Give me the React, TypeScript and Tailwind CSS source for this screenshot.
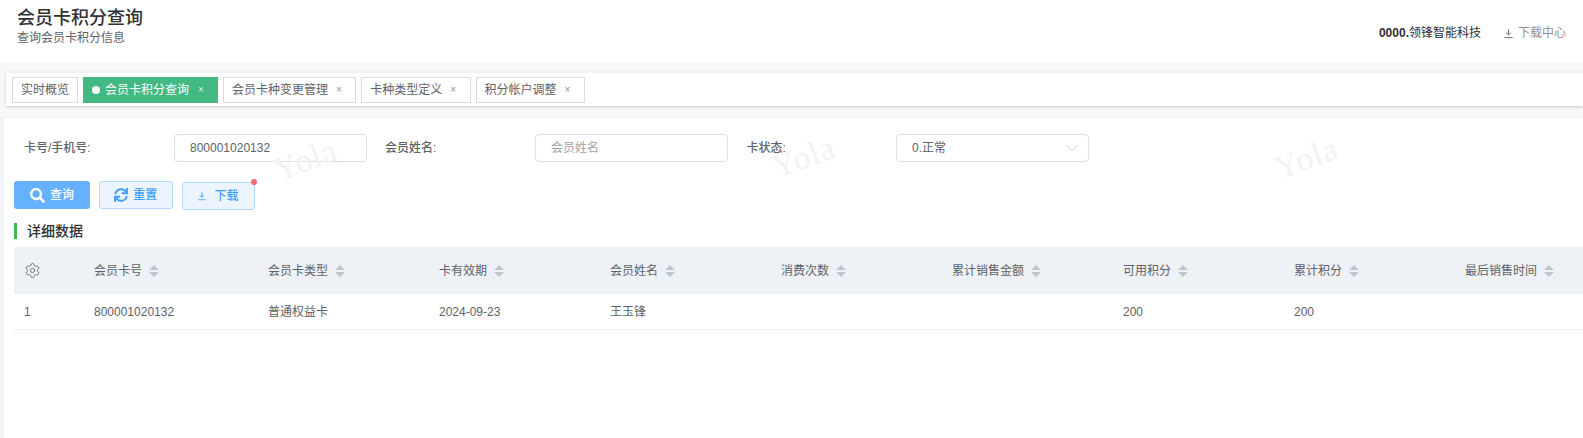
import React from 'react';
import { Settings, ChevronDown } from 'lucide-react';
import { FaSearch, FaSync } from 'react-icons/fa';

const font = { fontFamily: '"Liberation Sans", "Noto Sans CJK SC", sans-serif' };

const tabs = ['会员卡种变更管理', '卡种类型定义', '积分帐户调整'];

const columns = [
    { title: '会员卡号', width: 'w-[174px]' },
    { title: '会员卡类型', width: 'w-[171px]' },
    { title: '卡有效期', width: 'w-[171px]' },
    { title: '会员姓名', width: 'w-[171px]' },
    { title: '消费次数', width: 'w-[171px]' },
    { title: '累计销售金额', width: 'w-[171px]' },
    { title: '可用积分', width: 'w-[171px]' },
    { title: '累计积分', width: 'w-[171px]' },
    { title: '最后销售时间', width: 'w-[171px]' },
];

const row = ['800001020132', '普通权益卡', '2024-09-23', '王玉锋', '', '', '200', '200', ''];

const DownloadIcon: React.FC<{ className?: string }> = (props) => (
    <svg viewBox="0 0 12 12" fill="none" stroke="currentColor" strokeWidth="1" className={props.className}>
        <path d="M6 1.5v6M3.4 5l2.6 2.6L8.6 5M1.5 10.5h9" />
    </svg>
);

const SortIcon = () => (
    <svg viewBox="0 0 10 12" className="w-[10px] h-[12px] ml-[7px] shrink-0" fill="#c0c4cc">
        <path d="M5 0l5 5H0zM0 7h10l-5 5z" />
    </svg>
);

const Watermark: React.FC<{ className: string }> = (props) => (
    <span className={`absolute rotate-[-20deg] text-[33px] leading-[36px] tracking-[1px] text-[#f2f2f4] pointer-events-none ${props.className}`} style={{ fontFamily: '"Liberation Serif", serif' }}>
        Yola
    </span>
);

const App: React.FC = () => {
    return (
        <div className="w-[1583px] h-[438px] overflow-hidden bg-[#f7f8fa] text-[#606266] text-[12px]" style={font}>
            {/* header */}
            <div className="h-[63px] bg-white flex justify-between pl-[17px] pr-[17px]">
                <div className="pt-[6px]">
                    <div className="text-[18px] leading-[24px] font-medium text-[#303133]">会员卡积分查询</div>
                    <div className="text-[12px] leading-[14px] mt-[1px] text-[#606266]">查询会员卡积分信息</div>
                </div>
                <div className="flex items-center gap-[22px] pt-[3px]">
                    <div className="text-[#303133]"><span className="font-bold">0000.</span>领锋智能科技</div>
                    <div className="flex items-center gap-[4px] text-[#909399]">
                        <DownloadIcon className="w-[11px] h-[11px] text-[#606266]" />
                        下载中心
                    </div>
                </div>
            </div>

            {/* tabs */}
            <div className="mt-[9px] ml-[6px] h-[34px] bg-white flex items-center gap-[5px] pl-[6px] border-t border-[#eef0f4] shadow-[0_1px_3px_rgba(0,0,0,0.2)]">
                <div className="h-[26px] flex items-center px-[8px] border border-[#d8dce5]">实时概览</div>
                <div className="h-[26px] flex items-center pl-[9px] pr-[14px] bg-[#42b983] text-white">
                    <span className="w-[8px] h-[8px] rounded-full bg-white mr-[5px]" />
                    会员卡积分查询
                    <span className="ml-[9px] text-[10px] text-[#d9f2e6]">×</span>
                </div>
                {tabs.map((tab) => (
                    <div key={tab} className="h-[26px] flex items-center pl-[8px] pr-[13.5px] border border-[#d8dce5]">
                        {tab}
                        <span className="ml-[8px] text-[10px] text-[#909399]">×</span>
                    </div>
                ))}
            </div>

            {/* content */}
            <div className="mt-[11px] h-[321px] bg-[#f0f2f5] pl-[4px]">
                <div className="relative h-full overflow-hidden bg-white pl-[10px] pt-[16px] border-t border-[#eef0f4]">
                    <Watermark className="left-[269px] top-[24px]" />
                    <Watermark className="left-[767px] top-[21px]" />
                    <Watermark className="left-[1270px] top-[22px]" />

                    {/* filters */}
                    <div className="flex items-center h-[28px]">
                        <div className="w-[160px] shrink-0 pl-[10px] font-medium">卡号/手机号:</div>
                        <div className="w-[192.5px] shrink-0 h-[28px] flex items-center pl-[15px] border border-[#dcdfe6] rounded-[4px]">800001020132</div>
                        <div className="w-[168.5px] shrink-0 pl-[18.5px] font-medium">会员姓名:</div>
                        <div className="w-[192.5px] shrink-0 h-[28px] flex items-center pl-[15px] border border-[#dcdfe6] rounded-[4px] text-[#a0a4ac]">会员姓名</div>
                        <div className="w-[168.5px] shrink-0 pl-[19px] font-medium">卡状态:</div>
                        <div className="w-[192.5px] shrink-0 h-[28px] flex items-center justify-between pl-[15px] pr-[5px] border border-[#dcdfe6] rounded-[4px]">
                            0.正常
                            <ChevronDown className="w-[22px] h-[22px] text-[#c0c4cc]" strokeWidth={1} />
                        </div>
                    </div>

                    {/* buttons */}
                    <div className="flex items-start mt-[19px]">
                        <button className="w-[76px] h-[28px] flex items-center justify-center gap-[5px] rounded-[3px] bg-[#66b1ff] text-white font-medium">
                            <FaSearch className="w-[15px] h-[15px]" />
                            查询
                        </button>
                        <button className="ml-[9px] w-[73.5px] h-[28px] flex items-center justify-center gap-[5px] rounded-[3px] border border-[#b3d8ff] bg-[#ecf5ff] text-[#409eff] font-medium">
                            <FaSync className="w-[14px] h-[14px]" />
                            重置
                        </button>
                        <button className="relative ml-[9px] w-[73px] h-[28px] mt-[1px] flex items-center justify-center gap-[7px] rounded-[3px] border border-[#b3d8ff] bg-[#ecf5ff] text-[#409eff] font-medium">
                            <DownloadIcon className="w-[10px] h-[10px]" />
                            下载
                            <span className="absolute right-[-3px] top-[-4px] w-[6px] h-[6px] rounded-full bg-[#f56c6c]" />
                        </button>
                    </div>

                    {/* section title */}
                    <div className="mt-[13px] h-[16px] flex items-center border-l-[3px] border-[#42b94f] pl-[10px] pt-[1px] text-[14px] font-medium text-[#303133]">详细数据</div>

                    {/* table */}
                    <div className="mt-[8px] w-[1569px]">
                        <div className="h-[47px] flex items-center bg-[#eef1f6]">
                            <div className="w-[70px] shrink-0 pl-[10px]">
                                <Settings className="w-[17px] h-[17px]" strokeWidth={1.2} />
                            </div>
                            {columns.map((col) => (
                                <div key={col.title} className={`${col.width} shrink-0 pl-[10px] flex items-center`}>
                                    {col.title}
                                    <SortIcon />
                                </div>
                            ))}
                        </div>
                        <div className="h-[36px] flex items-center border-b border-[#ebeef5]">
                            <div className="w-[70px] shrink-0 pl-[10px]">1</div>
                            {columns.map((col, i) => (
                                <div key={col.title} className={`${col.width} shrink-0 pl-[10px]`}>{row[i]}</div>
                            ))}
                        </div>
                    </div>
                </div>
            </div>
        </div>
    );
};

export default App;
